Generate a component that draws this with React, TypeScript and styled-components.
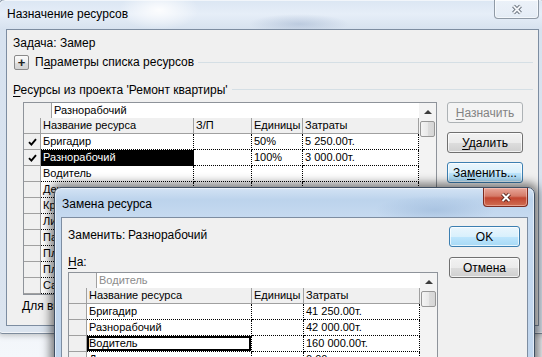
import styled, { createGlobalStyle, css } from "styled-components";

const GlobalStyle = createGlobalStyle`
  html, body { margin: 0; padding: 0; }
  body {
    width: 542px;
    height: 357px;
    overflow: hidden;
    font-family: "Liberation Sans", Arial, sans-serif;
    font-size: 12px;
    color: #000;
  }
`;

type Res = {
  name: string;
  check?: boolean;
  zp?: string;
  units?: string;
  cost?: string;
  selected?: boolean;
  outlined?: boolean;
};

const mainRows: Res[] = [
  { name: "Бригадир", check: true, units: "50%", cost: "5 250.00т." },
  { name: "Разнорабочий", check: true, units: "100%", cost: "3 000.00т.", selected: true },
  { name: "Водитель" },
  { name: "Декоратор" },
  { name: "Кровельщик" },
  { name: "Линолеум" },
  { name: "Паркет" },
  { name: "Плиточник" },
  { name: "Плотник" },
  { name: "Сантехник" },
];

const replaceRows: Res[] = [
  { name: "Бригадир", cost: "41 250.00т." },
  { name: "Разнорабочий", cost: "42 000.00т." },
  { name: "Водитель", cost: "160 000.00т.", outlined: true },
  { name: "Декоратор", cost: "0.00т." },
];

const Desktop = styled.div`
  position: relative;
  width: 542px;
  height: 357px;
  overflow: hidden;
  background: linear-gradient(180deg, #dfe8f3 0%, #f4f7fb 100%);
`;

const Window = styled.div<{ $x: number; $y: number; $w: number; $h: number; $pad: number; $active?: boolean }>`
  position: absolute;
  left: ${(p) => p.$x}px;
  top: ${(p) => p.$y}px;
  width: ${(p) => p.$w}px;
  height: ${(p) => p.$h}px;
  box-sizing: border-box;
  display: flex;
  flex-direction: column;
  padding: 0 ${(p) => p.$pad}px ${(p) => p.$pad}px;
  border: 1px solid ${(p) => (p.$active ? "#3f4f63" : "#7d8b9c")};
  border-radius: 7px 7px 4px 4px;
  ${(p) =>
    p.$active
      ? css`
          background:
            radial-gradient(ellipse 60px 14px at 380px 22px, rgba(150, 180, 215, 0.55), transparent),
            linear-gradient(180deg, #d3e3f4 0px, #bcd3ec 12px, #c6daf0 29px, #bfd4ec 100%);
          box-shadow: 0 0 10px 4px rgba(0, 0, 0, 0.5), inset 0 0 0 1px rgba(255, 255, 255, 0.55);
        `
      : css`
          background:
            radial-gradient(ellipse 40px 20px at 160px 10px, rgba(255, 255, 255, 0.9), transparent),
            radial-gradient(ellipse 50px 10px at 300px 24px, rgba(150, 170, 200, 0.45), transparent),
            linear-gradient(180deg, #dbe6f3 0px, #e6eef8 14px, #d7e2ef 29px, #dbe4ef 100%);
          box-shadow: 0 1px 6px rgba(0, 0, 0, 0.25), inset 0 0 0 1px rgba(255, 255, 255, 0.6);
        `}
`;

const TitleBar = styled.div`
  height: 29px;
  flex: none;
  display: flex;
  align-items: flex-start;
  padding-left: 1px;
`;

const TitleText = styled.div<{ $active?: boolean }>`
  line-height: 29px;
  padding-top: ${(p) => (p.$active ? 2 : 0)}px;
  font-size: 12px;
  color: #000;
`;

const CloseButton = styled.div<{ $active?: boolean }>`
  margin-left: auto;
  width: 45px;
  height: 19px;
  box-sizing: border-box;
  display: flex;
  align-items: center;
  justify-content: center;
  border-radius: 0 0 4px 4px;
  border: 1px solid ${(p) => (p.$active ? "#7c2b20" : "#8f9aa6")};
  border-top: none;
  ${(p) =>
    p.$active
      ? css`
          background: linear-gradient(180deg, #e8a89b 0%, #d57a68 45%, #c24530 55%, #cf6e52 100%);
          box-shadow: inset 0 0 0 1px rgba(255, 210, 200, 0.5);
        `
      : css`
          background: linear-gradient(180deg, rgba(255, 255, 255, 0.45), rgba(225, 233, 242, 0.5));
          box-shadow: inset 0 0 0 1px rgba(255, 255, 255, 0.6);
        `}
`;

const Client = styled.div`
  flex: 1;
  min-height: 0;
  box-sizing: border-box;
  border: 1px solid #7d8da1;
  background: #f0f0f0;
  display: flex;
  flex-direction: column;
  overflow: hidden;
`;

const MainBody = styled.div`
  display: flex;
  flex-direction: column;
  padding: 6px 5px 0 6px;
`;

const Line = styled.div<{ $mt?: number; $ml?: number }>`
  height: 15px;
  line-height: 15px;
  white-space: nowrap;
  margin-top: ${(p) => p.$mt ?? 0}px;
  margin-left: ${(p) => p.$ml ?? 0}px;
`;

const SectionRow = styled.div<{ $mt: number; $h: number }>`
  display: flex;
  align-items: center;
  height: ${(p) => p.$h}px;
  margin-top: ${(p) => p.$mt}px;
  white-space: nowrap;
`;

const Divider = styled.div`
  flex: 1;
  height: 1px;
  margin-left: 4px;
  background: #d5dfe5;
`;

const ExpandButton = styled.div`
  width: 15px;
  height: 15px;
  box-sizing: border-box;
  margin-left: 1px;
  margin-right: 6px;
  border: 1px solid #8a8a8a;
  border-radius: 2px;
  background: linear-gradient(180deg, #fbfbfb 0%, #ececec 50%, #dedede 51%, #d3d3d3 100%);
  display: flex;
  align-items: center;
  justify-content: center;
  font-size: 13px;
  line-height: 13px;
  font-weight: bold;
  color: #222;
`;

const Key = styled.span`
  text-decoration: underline;
  text-underline-offset: 2px;
`;

const ListRow = styled.div<{ $mt: number; $ml: number }>`
  display: flex;
  align-items: flex-start;
  margin-top: ${(p) => p.$mt}px;
  margin-left: ${(p) => p.$ml}px;
`;

const ButtonColumn = styled.div<{ $ml: number; $pt?: number; $gap: number }>`
  display: flex;
  flex-direction: column;
  gap: ${(p) => p.$gap}px;
  margin-left: ${(p) => p.$ml}px;
  padding-top: ${(p) => p.$pt ?? 0}px;
`;

const Button = styled.div<{ $w: number; $variant?: "normal" | "disabled" | "default" }>`
  width: ${(p) => p.$w}px;
  height: 21px;
  box-sizing: border-box;
  border-radius: 3px;
  display: flex;
  align-items: center;
  justify-content: center;
  font-size: 12px;
  ${(p) =>
    p.$variant === "disabled"
      ? css`
          border: 1px solid #adb2b5;
          background: #f4f4f4;
          color: #838383;
        `
      : p.$variant === "default"
      ? css`
          border: 1px solid #3c7fb1;
          background: linear-gradient(180deg, #eaf6fd 0%, #d9f0fc 50%, #bee6fd 51%, #a7d9f5 100%);
          box-shadow: inset 0 0 0 1px rgba(255, 255, 255, 0.7);
          color: #000;
        `
      : css`
          border: 1px solid #707070;
          background: linear-gradient(180deg, #f2f2f2 0%, #ebebeb 50%, #dddddd 51%, #cfcfcf 100%);
          box-shadow: inset 0 0 0 1px rgba(255, 255, 255, 0.7);
          color: #000;
        `}
`;

/* resource grid */

const GridBox = styled.div<{ $w: number; $h: number; $mt?: number }>`
  width: ${(p) => p.$w}px;
  height: ${(p) => p.$h}px;
  margin-top: ${(p) => p.$mt ?? 0}px;
  box-sizing: border-box;
  border: 1px solid #8e939a;
  background: #f0f0f0;
  display: flex;
  overflow: hidden;
  font-size: 11px;
  flex: none;
`;

const GridBody = styled.div`
  flex: 1;
  display: flex;
  flex-direction: column;
  min-width: 0;
`;

const EntryRow = styled.div<{ $gap: number }>`
  height: 15px;
  flex: none;
  display: grid;
  grid-template-columns: ${(p) => p.$gap}px 1fr;
`;

const EntrySpacer = styled.div`
  border-right: 1px solid #a0a0a0;
  background: #f0f0f0;
`;

const EntryInput = styled.div<{ $muted?: boolean }>`
  background: #fff;
  padding-left: 2px;
  line-height: 15px;
  color: ${(p) => (p.$muted ? "#8c8c8c" : "#000")};
`;

const Row = styled.div<{ $cols: string }>`
  display: grid;
  grid-template-columns: ${(p) => p.$cols};
  height: 16px;
  flex: none;
`;

const IndCell = styled.div`
  box-sizing: border-box;
  border-right: 1px solid #a0a0a0;
  border-bottom: 1px solid #a0a0a0;
  background: #f0f0f0;
  display: flex;
  align-items: center;
  justify-content: center;
`;

const HeadCell = styled.div`
  box-sizing: border-box;
  border-right: 1px solid #a0a0a0;
  border-bottom: 1px solid #a0a0a0;
  background: #f0f0f0;
  padding-left: 2px;
  line-height: 15px;
  white-space: nowrap;
  overflow: hidden;
`;

const DataCell = styled.div<{ $selected?: boolean; $outlined?: boolean }>`
  box-sizing: border-box;
  border-right: 1px dotted #000;
  border-bottom: 1px dotted #000;
  background: ${(p) => (p.$selected ? "#000" : "#fff")};
  color: ${(p) => (p.$selected ? "#fff" : "#000")};
  padding-left: 2px;
  line-height: 15px;
  white-space: nowrap;
  overflow: hidden;
  ${(p) =>
    p.$outlined &&
    css`
      box-shadow: inset 0 0 0 2px #000;
    `}
`;

const ScrollBar = styled.div`
  width: 17px;
  flex: none;
  background: #f3f3f3;
  display: flex;
  flex-direction: column;
  align-items: center;
`;

const ArrowUp = styled.div`
  height: 17px;
  width: 17px;
  display: flex;
  align-items: center;
  justify-content: center;
  &::before {
    content: "";
    border-left: 4px solid transparent;
    border-right: 4px solid transparent;
    border-bottom: 4px solid #3c3c3c;
  }
`;

const Thumb = styled.div`
  width: 15px;
  height: 16px;
  box-sizing: border-box;
  margin-top: 1px;
  border: 1px solid #979797;
  border-radius: 2px;
  background: linear-gradient(90deg, #f4f4f4 0%, #e9e9e9 50%, #dcdcdc 51%, #d6d6d6 100%);
`;

/* replace dialog */

const ReplaceBody = styled.div`
  display: flex;
  align-items: flex-start;
`;

const ReplaceMain = styled.div`
  display: flex;
  flex-direction: column;
  padding: 10px 0 0 6px;
`;

const FieldLine = styled.div`
  display: flex;
  height: 15px;
  line-height: 15px;
`;

const FieldLabel = styled.span`
  width: 60px;
`;

const Check = () => (
  <svg width="9" height="8" viewBox="0 0 9 8">
    <path d="M1 4.2 L3.4 6.6 L8 1.2" fill="none" stroke="#000" strokeWidth="1.9" />
  </svg>
);

const CloseGlyph = ({ active }: { active?: boolean }) => (
  <svg width="14" height="11" viewBox="0 0 14 11">
    <path d="M3.5 2 L10.5 9 M10.5 2 L3.5 9" stroke={active ? "#4a1c14" : "#56606c"} strokeWidth="3.8" />
    <path d="M3.5 2 L10.5 9 M10.5 2 L3.5 9" stroke={active ? "#ffffff" : "#f3f5f8"} strokeWidth="2" />
  </svg>
);

function ResourceGrid({
  w,
  h,
  mt,
  cols,
  entry,
  muted,
  headers,
  rows,
}: {
  w: number;
  h: number;
  mt?: number;
  cols: number[];
  entry: string;
  muted?: boolean;
  headers: string[];
  rows: Res[];
}) {
  const template = cols.map((c) => `${c}px`).join(" ");
  const withZp = headers.length === 4;
  return (
    <GridBox $w={w} $h={h} $mt={mt}>
      <GridBody>
        <EntryRow $gap={28}>
          <EntrySpacer />
          <EntryInput $muted={muted}>{entry}</EntryInput>
        </EntryRow>
        <Row $cols={template}>
          <IndCell />
          {headers.map((t) => (
            <HeadCell key={t}>{t}</HeadCell>
          ))}
        </Row>
        {rows.map((r, i) => (
          <Row $cols={template} key={i}>
            <IndCell>{r.check && <Check />}</IndCell>
            <DataCell $selected={r.selected} $outlined={r.outlined}>
              {r.name}
            </DataCell>
            {withZp && <DataCell>{r.zp}</DataCell>}
            <DataCell>{r.units}</DataCell>
            <DataCell>{r.cost}</DataCell>
          </Row>
        ))}
      </GridBody>
      <ScrollBar>
        <ArrowUp />
        <Thumb />
      </ScrollBar>
    </GridBox>
  );
}

export default function App() {
  return (
    <Desktop>
      <GlobalStyle />

      <Window $x={-2} $y={-1} $w={549} $h={335} $pad={7}>
        <TitleBar>
          <TitleText>Назначение ресурсов</TitleText>
          <CloseButton>
            <CloseGlyph />
          </CloseButton>
        </TitleBar>
        <Client>
          <MainBody>
            <Line>Задача: Замер</Line>
            <SectionRow $mt={3} $h={16}>
              <ExpandButton>+</ExpandButton>
              <span>
                П<Key>а</Key>раметры списка ресурсов
              </span>
              <Divider />
            </SectionRow>
            <SectionRow $mt={12} $h={15}>
              <span>
                <Key>Р</Key>есурсы из проекта 'Ремонт квартиры'
              </span>
              <Divider />
            </SectionRow>
            <ListRow $mt={5} $ml={10}>
              <ResourceGrid
                w={414}
                h={193}
                cols={[17, 153, 58, 51, 116]}
                entry="Разнорабочий"
                headers={["Название ресурса", "З/П", "Единицы", "Затраты"]}
                rows={mainRows}
              />
              <ButtonColumn $ml={10} $gap={9}>
                <Button $w={76} $variant="disabled">
                  <span>
                    <Key>Н</Key>азначить
                  </span>
                </Button>
                <Button $w={76}>
                  <span>
                    <Key>У</Key>далить
                  </span>
                </Button>
                <Button $w={76} $variant="default">
                  <span>
                    За<Key>м</Key>енить...
                  </span>
                </Button>
              </ButtonColumn>
            </ListRow>
            <Line $mt={4} $ml={9}>
              Для выбора нескольких ресурсов
            </Line>
          </MainBody>
        </Client>
      </Window>

      <Window $x={54} $y={187} $w={481} $h={220} $pad={6} $active>
        <TitleBar>
          <TitleText $active>Замена ресурса</TitleText>
          <CloseButton $active>
            <CloseGlyph active />
          </CloseButton>
        </TitleBar>
        <Client>
          <ReplaceBody>
            <ReplaceMain>
              <FieldLine>
                <FieldLabel>Заменить:</FieldLabel>
                <span>Разнорабочий</span>
              </FieldLine>
              <Line $mt={12}>
                <Key>Н</Key>а:
              </Line>
              <ResourceGrid
                w={370}
                h={110}
                mt={2}
                cols={[18, 165, 52, 116]}
                entry="Водитель"
                muted
                headers={["Название ресурса", "Единицы", "Затраты"]}
                rows={replaceRows}
              />
            </ReplaceMain>
            <ButtonColumn $ml={11} $pt={8} $gap={10}>
              <Button $w={71} $variant="default">OK</Button>
              <Button $w={71}>Отмена</Button>
            </ButtonColumn>
          </ReplaceBody>
        </Client>
      </Window>
    </Desktop>
  );
}
